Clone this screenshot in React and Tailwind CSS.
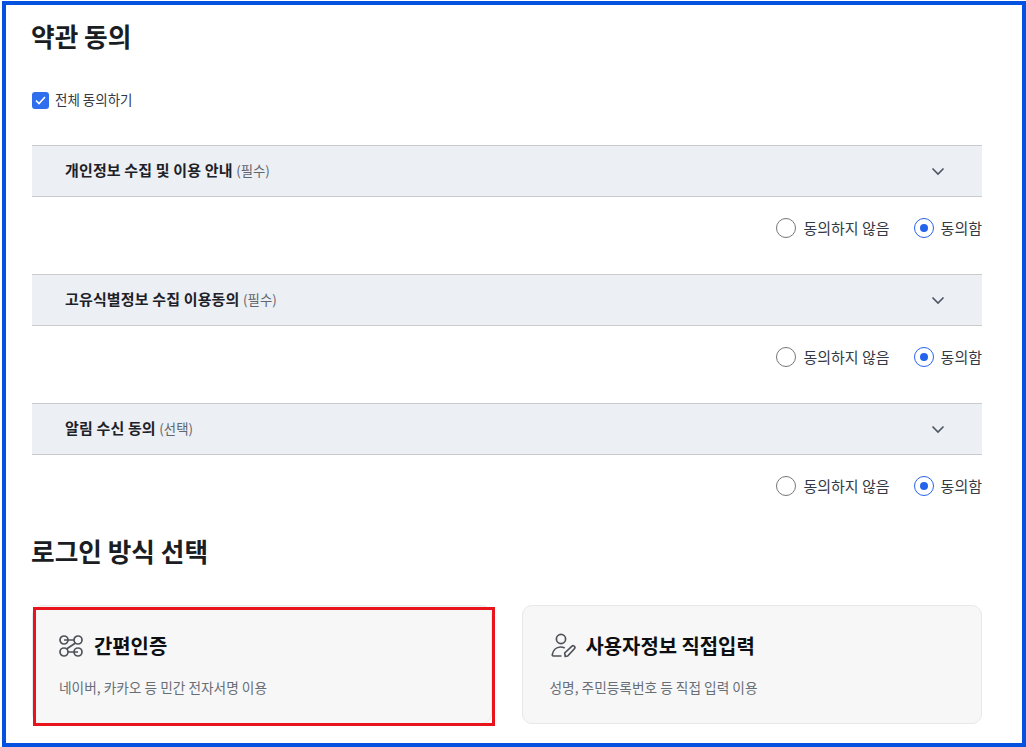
const font = { fontFamily: '"Noto Sans CJK KR", "Noto Sans", sans-serif' };

function Chevron() {
  return (
    <svg width="14" height="9" viewBox="0 0 14 9" fill="none" stroke="#4b5563" strokeWidth="1.6" className="block">
      <path d="M1.5 1.5 L7 7 L12.5 1.5" />
    </svg>
  );
}

function Radio({ checked, label }) {
  return (
    <div className="flex items-center gap-[7px]">
      {checked ? (
        <span className="flex h-[20px] w-[20px] items-center justify-center rounded-full border border-[#2563eb] bg-white">
          <span className="h-[8px] w-[8px] rounded-full bg-[#2563eb]" />
        </span>
      ) : (
        <span className="h-[20px] w-[20px] rounded-full border border-[#767676] bg-white" />
      )}
      <span className="text-[15px] leading-[20px] text-[#333a45]">{label}</span>
    </div>
  );
}

function Term({ title, tag, className }) {
  return (
    <section className={className}>
      <div className="flex h-[52px] items-center justify-between border-y border-[#c8cacd] bg-[#eceff3] pl-[33px] pr-[37px]">
        <p className="-mt-[2px] text-[15px] leading-[20px] tracking-[0.15px]">
          <span className="font-bold text-[#1d2128]">{title}</span>{" "}
          <span className="text-[13.4px] tracking-normal text-[#5f6670]">{tag}</span>
        </p>
        <Chevron />
      </div>
      <div className="mt-[21px] flex justify-end gap-[24px]">
        <Radio label="동의하지 않음" />
        <Radio checked label="동의함" />
      </div>
    </section>
  );
}

function NodesIcon() {
  return (
    <svg width="24" height="24" viewBox="0 0 24 24" fill="none" stroke="#4f5359" strokeWidth="1.7">
      <circle cx="5" cy="6" r="4" />
      <circle cx="19" cy="6" r="4" />
      <circle cx="5" cy="18" r="4" />
      <circle cx="19" cy="18" r="4" />
      <path d="M5 6h10M9 18h10M7.5 15 16.5 9" />
    </svg>
  );
}

function UserPenIcon() {
  return (
    <svg width="26" height="26" viewBox="0 0 26 26" fill="none" stroke="#4f5359" strokeWidth="1.7" strokeLinejoin="round">
      <circle cx="11" cy="6" r="4.6" />
      <path d="M11.5 23H3.3c-.8 0-1.1-.6-1-1.3C3 17.5 6 14 10.5 14c1.6 0 3 .3 4.2 1" />
      <path d="M15.2 23.5 14.7 20 22 13.2c.8-.7 1.8-.6 2.4.1.7.7.7 1.7 0 2.4L17.7 23Z" />
    </svg>
  );
}

function LoginCard({ icon, title, desc, widthClass, padClass, iconGap }) {
  return (
    <div className={`h-[119px] rounded-[10px] border border-[#e7e8ea] bg-[#f7f7f8] pt-[25px] ${widthClass} ${padClass}`}>
      <div className={`flex h-[30px] items-center ${iconGap}`}>
        {icon}
        <h3 className="text-[19.9px] font-bold leading-[30px] text-[#0d0f13]">{title}</h3>
      </div>
      <p className="mt-[16px] text-[13.7px] leading-[20px] text-[#686e76]">{desc}</p>
    </div>
  );
}

export default function App() {
  return (
    <div style={font} className="relative h-[747px] w-[1026px] overflow-hidden bg-white">
      <main className="pl-[32px] pr-[44px] pt-[18px]">
        <h2 className="-ml-[1px] text-[25.7px] font-bold leading-[36px] text-[#1a1d22]">약관 동의</h2>
        <label className="mt-[36px] flex h-[20px] items-center gap-[6px]">
          <span className="flex h-[17px] w-[17px] items-center justify-center rounded-[3px] bg-[#2f6fed]">
            <svg width="11" height="9" viewBox="0 0 11 9" fill="none" stroke="#fff" strokeWidth="1.6">
              <path d="M1 4.5 4 7.5 10 1" />
            </svg>
          </span>
          <span className="-mt-[2px] text-[13.5px] leading-[20px] text-[#333a45]">전체 동의하기</span>
        </label>
        <Term className="mt-[35px]" title="개인정보 수집 및 이용 안내" tag="(필수)" />
        <Term className="mt-[36px]" title="고유식별정보 수집 이용동의" tag="(필수)" />
        <Term className="mt-[36px]" title="알림 수신 동의" tag="(선택)" />
        <h2 className="-ml-[1px] mt-[37px] text-[25.7px] font-bold leading-[36px] text-[#1a1d22]">로그인 방식 선택</h2>
        <div className="mt-[36px] flex gap-[30px]">
          <LoginCard widthClass="w-[460px]" padClass="pl-[26px]" icon={<NodesIcon />} iconGap="gap-[11px]" title="간편인증" desc="네이버, 카카오 등 민간 전자서명 이용" />
          <LoginCard widthClass="w-[461px]" padClass="pl-[27px]" icon={<UserPenIcon />} iconGap="gap-[10px]" title="사용자정보 직접입력" desc="성명, 주민등록번호 등 직접 입력 이용" />
        </div>
      </main>
      <div className="pointer-events-none absolute left-[33px] top-[607px] h-[119px] w-[462px] border-[3px] border-[#e8141c]" />
      <div className="pointer-events-none absolute bottom-0 left-[2px] right-0 top-[1px] border-[4px] border-[#0652e0]" />
    </div>
  );
}
